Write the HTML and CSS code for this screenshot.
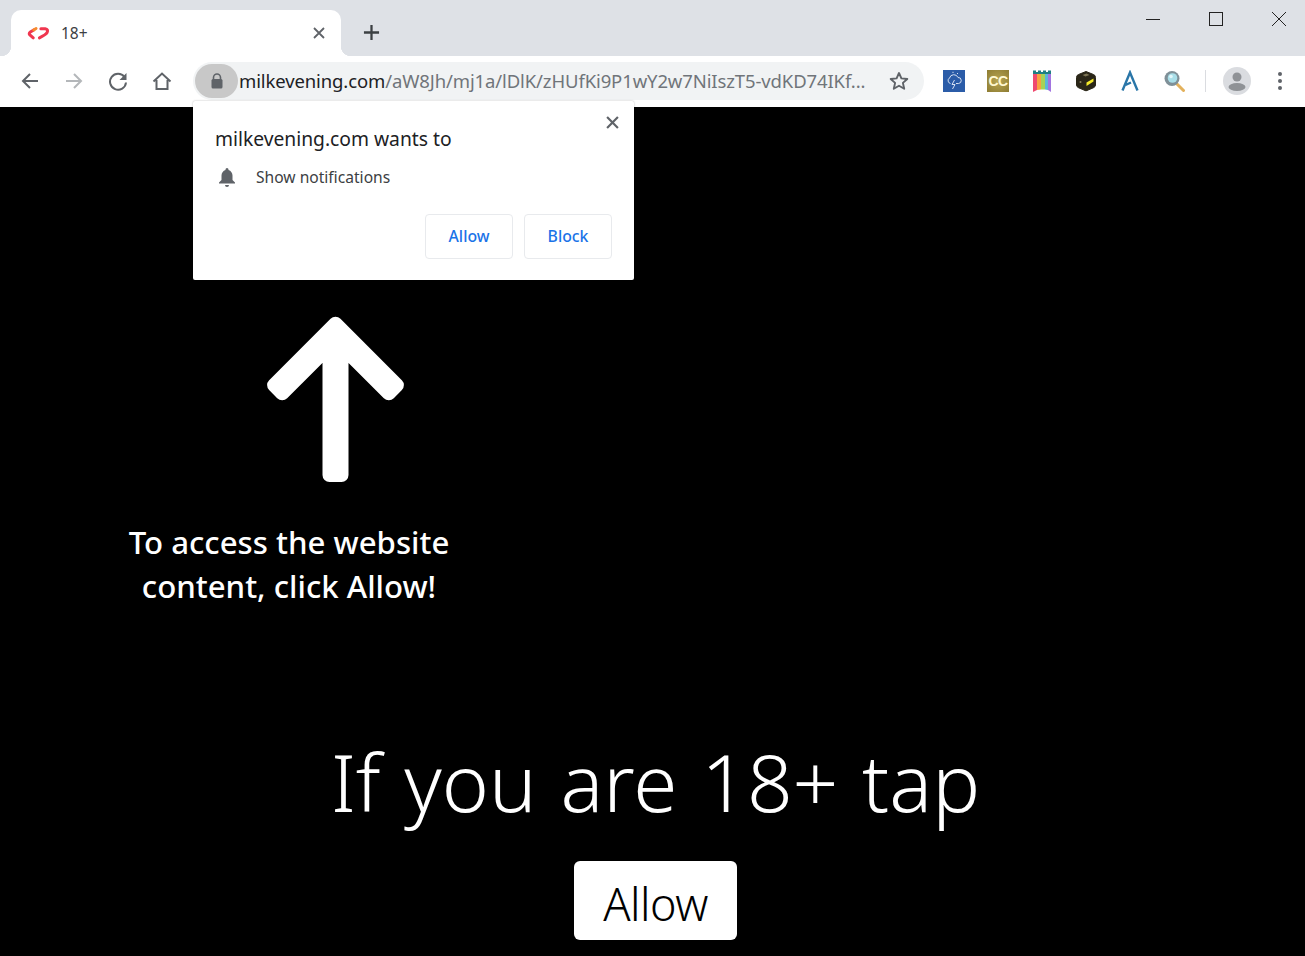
FILE: index.html
```html
<!DOCTYPE html>
<html lang="en">
<head>
<meta charset="utf-8">
<title>18+</title>
<link rel="stylesheet" href="styles.css">
</head>
<body>
<div class="window">
  <header class="tabstrip">
    <div class="tab">
      <svg class="favicon" viewBox="0 0 24 14"><path d="M6.500 12 3 9Q1.500 7.500 3.500 6L7 3.800" stroke="#f0364f" stroke-width="3.200" fill="none" stroke-linecap="round"/><path d="M7 3.800 9.500 2.300" stroke="#f58a2e" stroke-width="3" fill="none" stroke-linecap="round"/><path d="M14.500 2.500H19Q22.500 3 21 6.500 19.500 9 13 12" stroke="#f0364f" stroke-width="3.200" fill="none" stroke-linecap="round"/></svg>
      <span class="tab-title">18+</span>
      <svg class="tab-close" viewBox="0 0 12 12"><path d="M1 1l10 10M11 1 1 11" stroke="#5f6368" stroke-width="1.800" fill="none"/></svg>
    </div>
    <svg class="new-tab" viewBox="0 0 18 18"><path d="M9 1v16M1 9h16" stroke="#3c4043" stroke-width="2.400" fill="none"/></svg>
    <div class="win-controls">
      <svg class="win-icon" viewBox="0 0 16 16"><path d="M1 8.500h14" stroke="#222" fill="none"/></svg>
      <svg class="win-icon" viewBox="0 0 16 16"><rect x="1.500" y="1.500" width="13" height="13" stroke="#222" fill="none"/></svg>
      <svg class="win-icon" viewBox="0 0 16 16"><path d="M1 1l14 14M15 1 1 15" stroke="#222" fill="none"/></svg>
    </div>
  </header>
  <nav class="toolbar">
    <svg class="nav-icon" viewBox="0 0 20 20"><path d="M18 10H3M10 3l-7 7 7 7" stroke="#5f6368" stroke-width="2" fill="none"/></svg>
    <svg class="nav-icon" viewBox="0 0 20 20"><path d="M2 10h15M10 3l7 7-7 7" stroke="#b4b7ba" stroke-width="2" fill="none"/></svg>
    <svg class="nav-icon" viewBox="0 0 20 20"><path d="M16.500 6A8 8 0 1 0 18 11.500" stroke="#5f6368" stroke-width="2" fill="none"/><path d="M18.500 2v7h-7z" fill="#5f6368"/></svg>
    <svg class="nav-icon" viewBox="0 0 20 20"><path d="M1.500 10.500 10 2.500l8.500 8M4.500 9v9h11V9" stroke="#5f6368" stroke-width="2" fill="none"/></svg>
    <div class="omnibox">
      <div class="lock-pill">
        <svg class="lock" viewBox="0 0 14 16"><path d="M3.500 7V4.500a3.500 3.500 0 0 1 7 0V7" stroke="#5f6368" stroke-width="1.600" fill="none"/><rect x="1.500" y="6" width="11" height="9.500" rx="1.500" fill="#5f6368"/></svg>
      </div>
      <div class="url"><span class="url-host">milkevening.com</span><span class="url-path">/aW8Jh/mj1a/lDlK/zHUfKi9P1wY2w7NiIszT5-vdKD74IKf...</span></div>
      <svg class="star" viewBox="0 0 20 20"><path d="M10 2l2.400 5.400 5.900.6-4.400 3.900 1.300 5.800L10 14.700l-5.200 3 1.300-5.800L1.700 8l5.900-.6z" stroke="#5f6368" stroke-width="1.900" fill="none" stroke-linejoin="round"/></svg>
    </div>
    <div class="extensions">
      <svg class="ext" viewBox="0 0 22 22"><rect width="22" height="22" fill="#2b5ca8"/><path d="M7.500 13.500A3 3 0 0 1 6.500 8 4.500 4.500 0 0 1 15 7.500a3 3 0 0 1 .5 6H13M11.500 10 9 14.500h3L9.500 19M10 3V1.800M14 4l1-1" stroke="#d5e0f2" fill="none" stroke-width="1"/></svg>
      <div class="ext ext-cc">CC</div>
      <svg class="ext" viewBox="0 0 22 22"><path d="M2 4V.5H5V2H7V.5H10V2H12V.5H15V2H17V.5H20V4z" fill="#1f7f83"/><path d="M2 4H6V20L2 22z" fill="#ef4a6f"/><path d="M6 4H10V19.500L6 20z" fill="#f8a13f"/><path d="M10 4H14V19.500L10 19.500z" fill="#a6d257"/><path d="M14 4H17V20L14 19.500z" fill="#5bb8d8"/><path d="M17 4H20V22L17 20z" fill="#a274e0"/></svg>
      <svg class="ext" viewBox="0 0 22 22"><path d="M11 1.500 18.500 4.500Q20.500 5.200 20.500 7.500V15Q20.500 16.800 18.500 17.700L12 20.500Q11 21 10 20.500L3.500 17.700Q1.500 16.800 1.500 15V7.500Q1.500 5.200 3.500 4.500z" fill="#2a2618" stroke="#2a2618" stroke-width="1"/><path d="M11.500 12.500 18.500 8.500V11.500L11.500 16z" fill="#f4ea2a"/><path d="M7.500 5 11.500 3.500 14.500 5 10.500 6.500z" fill="#7d7454"/><circle cx="5.500" cy="12" r="1" fill="#8c8260"/></svg>
      <svg class="ext" viewBox="0 0 22 22"><path d="M3.500 20.500 11 2.500l7.500 18M6.500 15l5.500-2.500" stroke="#2a76a8" stroke-width="2.400" fill="none"/></svg>
      <svg class="ext" viewBox="0 0 22 22"><path d="M13.500 13.500 20.500 20.500" stroke="#e3b15c" stroke-width="3" stroke-linecap="round"/><circle cx="9" cy="8.500" r="7.500" fill="#7f9098"/><circle cx="9.500" cy="8" r="4.800" fill="#a9dfe9"/><circle cx="8" cy="6.500" r="1.800" fill="#e2f6fa"/></svg>
    </div>
    <span class="toolbar-sep"></span>
    <div class="avatar">
      <svg viewBox="0 0 28 28"><circle cx="14" cy="14" r="14" fill="#dadce0"/><circle cx="14" cy="10" r="4.500" fill="#8f9296"/><ellipse cx="14" cy="20" rx="8.500" ry="4" fill="#8f9296"/></svg>
    </div>
    <svg class="menu" viewBox="0 0 4 20"><circle cx="2" cy="3" r="2" fill="#5f6368"/><circle cx="2" cy="10" r="2" fill="#5f6368"/><circle cx="2" cy="17" r="2" fill="#5f6368"/></svg>
  </nav>
  <main class="page">
    <section class="hint">
      <svg class="arrow" viewBox="260 310 150 180"><path d="M335.500 323.700 396.900 385.100 388.800 393.300 341.500 346V475H329.500V346L282.200 393.300 274.100 385.100z" fill="#fff" stroke="#fff" stroke-width="14" stroke-linejoin="round"/></svg>
      <p class="hint-text">To access the website<br>content, click Allow!</p>
    </section>
    <section class="cta">
      <h1 class="cta-title">If you are 18+ tap</h1>
      <button class="cta-button">Allow</button>
    </section>
  </main>
  <div class="dialog">
    <svg class="dialog-close" viewBox="0 0 12 12"><path d="M1 1l10 10M11 1 1 11" stroke="#5f6368" stroke-width="2" fill="none"/></svg>
    <div class="dialog-title">milkevening.com wants to</div>
    <div class="dialog-row">
      <svg class="bell" viewBox="0 0 18 20"><path d="M9 1a1.500 1.500 0 0 1 1.500 1.500v.4C13 3.600 14.500 6 14.500 8.500V13L17 15.500V16.500H1V15.500L3.500 13V8.500C3.500 6 5 3.600 7.500 2.900v-.4A1.500 1.500 0 0 1 9 1zM7 18h4a2 2 0 0 1-4 0z" fill="#5f6368"/></svg>
      <span>Show notifications</span>
    </div>
    <div class="dialog-actions">
      <button class="dialog-btn">Allow</button>
      <button class="dialog-btn">Block</button>
    </div>
  </div>
</div>
</body>
</html>
```
FILE: styles.css
```css
* { box-sizing: border-box; }
html, body { margin: 0; height: 100%; overflow: hidden; }
body { font-family: "Noto Sans", "Open Sans", sans-serif; background: #000; }
.window { position: relative; width: 1305px; height: 956px; display: flex; flex-direction: column; }

.tabstrip { height: 56px; flex: none; background: #dee1e6; display: flex; align-items: flex-start; padding: 10px 0 0 11px; }
.tab { position: relative; width: 330px; height: 46px; background: #fff; border-radius: 10px 10px 0 0; display: flex; align-items: center; padding: 0 15px 0 16px; }
.tab::before, .tab::after { content: ""; position: absolute; bottom: 0; width: 10px; height: 10px; }
.tab::before { left: -10px; background: radial-gradient(circle at 0 0, transparent 10px, #fff 10.500px); }
.tab::after { right: -10px; background: radial-gradient(circle at 100% 0, transparent 10px, #fff 10.500px); }
.favicon { width: 23px; height: 14px; flex: none; }
.tab-title { margin-left: 11px; font-size: 15.500px; line-height: 20px; color: #3c4043; }
.tab-close { width: 12px; height: 12px; margin-left: auto; margin-right: 1px; }
.new-tab { width: 17px; height: 17px; margin: 14px 0 0 22px; }
.win-controls { margin-left: auto; display: flex; gap: 47px; padding: 1px 18px 0 0; }
.win-icon { width: 16px; height: 16px; display: block; }

.toolbar { height: 51px; flex: none; background: #fff; display: flex; align-items: center; padding: 0 0 1px 20px; position: relative; }
.nav-icon { width: 20px; height: 20px; flex: none; margin-right: 24px; }
.nav-icon:nth-of-type(4) { margin-right: 21px; }
.omnibox { width: 731px; height: 38px; background: #f1f3f4; border-radius: 19px; display: flex; align-items: center; padding: 0 15px 0 2px; flex: none; }
.lock-pill { width: 43px; height: 34px; background: #c8c8c8; border-radius: 17px; display: flex; align-items: center; justify-content: center; flex: none; }
.lock { width: 14px; height: 16px; }
.url { margin-left: 1px; padding-bottom: 2px; font-size: 18.500px; white-space: nowrap; flex: 1; overflow: hidden; letter-spacing: -.12px; }
.url-host { color: #202124; }
.url-path { color: #70757a; }
.star { width: 20px; height: 20px; flex: none; }
.extensions { display: flex; align-items: center; gap: 22px; margin-left: 19px; }
.ext { width: 22px; height: 22px; display: block; flex: none; }
.ext-cc { background: radial-gradient(circle at 50% 50%, #b8a552, #8d7c32); color: #fff8d0; font: 700 14px/22px "Liberation Sans", sans-serif; text-align: center; letter-spacing: -.5px; }
.toolbar-sep { width: 1px; height: 22px; background: #dadce0; margin-left: 20px; }
.avatar { width: 28px; height: 28px; margin-left: 17px; }
.avatar svg { display: block; }
.menu { width: 4px; height: 20px; margin-left: 27px; }

.page { flex: 1; background: #000; padding-top: 210px; color: #fff; }
.hint { width: 400px; margin-left: 89px; }
.arrow { display: block; width: 150px; height: 180px; margin: -7px 0 0 171px; }
.hint-text { margin: 30px 0 0; font-size: 31.200px; font-weight: 500; line-height: 44px; text-align: center; }
.cta { margin-top: 119px; display: flex; flex-direction: column; align-items: center; padding-left: 6px; }
.cta-title { margin: 0; font-size: 80px; font-weight: 300; line-height: 108px; white-space: nowrap; word-spacing: 3px; }
.cta-button { margin-top: 26px; width: 163px; height: 79px; border: 0; border-radius: 6px; background: #fff; color: #000; font: 300 45px "Noto Sans", sans-serif; letter-spacing: -.5px; padding: 5px 0 0; }

.dialog { position: absolute; left: 193px; top: 101px; width: 441px; height: 179px; background: #fff; border-radius: 2px; box-shadow: 0 0 2px rgba(0,0,0,.3); padding: 25px 22px 0; color: #202124; }
.dialog-close { position: absolute; top: 15px; right: 15px; width: 13px; height: 13px; }
.dialog-title { font-size: 19.250px; line-height: 26px; }
.dialog-row { margin-top: 13px; display: flex; align-items: center; font-size: 15.600px; line-height: 24px; color: #3c4043; }
.bell { width: 18px; height: 20px; margin: 0 20px 0 3px; flex: none; }
.dialog-actions { position: absolute; right: 22px; bottom: 21px; display: flex; gap: 11px; }
.dialog-btn { width: 88px; height: 45px; background: #fff; border: 1px solid #e8eaed; border-radius: 4px; color: #1a73e8; font: 500 15.800px "Noto Sans", sans-serif; padding: 0 0 2px; }
```
